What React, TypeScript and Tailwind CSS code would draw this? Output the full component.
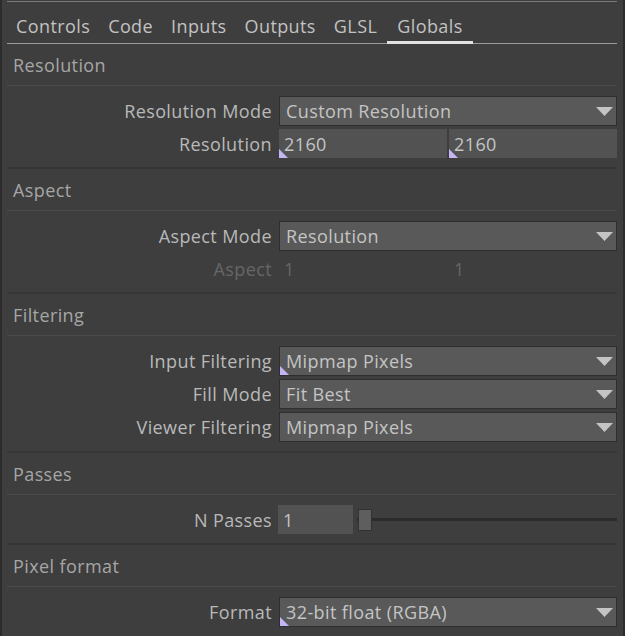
import React from "react";

const font = { fontFamily: '"Open Sans", "Noto Sans", sans-serif', letterSpacing: "0.4px" };

function Marker() {
  return (
    <svg className="absolute left-0 bottom-0" width="9" height="9" viewBox="0 0 9 9">
      <polygon points="0,0 9,9 0,9" fill="#c6b5f4" />
    </svg>
  );
}

function Label({ text, dim }: { text: string; dim?: boolean }) {
  return (
    <div className={`w-[272px] shrink-0 text-right pr-[7px] ${dim ? "text-[#666666]" : "text-[#b9b9b9]"}`}>
      {text}
    </div>
  );
}

function Dropdown({ value, marker }: { value: string; marker?: boolean }) {
  return (
    <div className="relative flex-1 h-[30px] bg-[#595959] border border-[#2e2e2e] flex items-center pl-[6px] text-[#c4c4c4]">
      <span className="flex-1">{value}</span>
      <svg className="mr-[3px]" width="17" height="9" viewBox="0 0 17 9">
        <polygon points="0,0 17,0 8.5,9" fill="#c4c4c4" />
      </svg>
      {marker && <Marker />}
    </div>
  );
}

function Field({ value, marker, className = "flex-1" }: { value: string; marker?: boolean; className?: string }) {
  return (
    <div className={`relative h-[29px] bg-[#525252] flex items-center pl-[5px] text-[#c4c4c4] ${className}`}>
      {value}
      {marker && <Marker />}
    </div>
  );
}

function Row({ children }: { children: React.ReactNode }) {
  return <div className="flex items-center">{children}</div>;
}

function Section({ title, children, last }: { title: string; children: React.ReactNode; last?: boolean }) {
  return (
    <div className={last ? "" : "border-b-2 border-[#363636]"}>
      <div className="h-[42px] flex items-center pl-[6px] text-[#a6a6a6] border-b border-[#4a4a4a]">{title}</div>
      <div className="pt-[10px] pb-[9px] flex flex-col gap-[3px]">{children}</div>
    </div>
  );
}

export default function App() {
  const tabs = ["Controls", "Code", "Inputs", "Outputs", "GLSL", "Globals"];
  return (
    <div
      className="w-[625px] h-[636px] overflow-hidden bg-[#3e3e3e] border-l-2 border-r-2 border-[#2c2c2c] text-[18px] leading-none"
      style={font}
    >
      <div className="ml-[5px] mr-[6px]">
        <div className="mt-[1px] h-px bg-[#7a7a7a]" />
        <div className="flex h-[42px] border-b border-[#9a9a9a]">
          {tabs.map((t) => (
            <div
              key={t}
              className={`flex items-center pt-[9px] text-[#c2c2c2] border-b-[3px] ${
                t === "Globals" ? "border-[#e2e2e2] -mb-px px-[10px] ml-[1px]" : "border-transparent px-[9px]"
              }`}
            >
              {t}
            </div>
          ))}
        </div>

        <Section title="Resolution">
          <Row>
            <Label text="Resolution Mode" />
            <Dropdown value="Custom Resolution" />
          </Row>
          <Row>
            <Label text="Resolution" />
            <div className="flex-1 flex gap-[2px]">
              <Field value="2160" marker />
              <Field value="2160" marker />
            </div>
          </Row>
        </Section>

        <Section title="Aspect">
          <Row>
            <Label text="Aspect Mode" />
            <Dropdown value="Resolution" />
          </Row>
          <Row>
            <Label text="Aspect" dim />
            <div className="flex-1 flex gap-[2px] h-[29px] items-center text-[#666666]">
              <div className="flex-1 pl-[5px]">1</div>
              <div className="flex-1 pl-[5px]">1</div>
            </div>
          </Row>
        </Section>

        <Section title="Filtering">
          <Row>
            <Label text="Input Filtering" />
            <Dropdown value="Mipmap Pixels" marker />
          </Row>
          <Row>
            <Label text="Fill Mode" />
            <Dropdown value="Fit Best" />
          </Row>
          <Row>
            <Label text="Viewer Filtering" />
            <Dropdown value="Mipmap Pixels" />
          </Row>
        </Section>

        <Section title="Passes">
          <Row>
            <Label text="N Passes" />
            <Field value="1" className="w-[75px] -ml-px" />
            <div className="relative flex-1 h-[29px] ml-[4px]">
              <div className="absolute left-0 right-0 top-[13px] h-[3px] bg-[#2b2b2b]" />
              <div className="absolute left-[1px] top-[4px] w-[14px] h-[22px] bg-[#5e5e5e] border border-[#323232]" />
            </div>
          </Row>
        </Section>

        <Section title="Pixel format" last>
          <Row>
            <Label text="Format" />
            <Dropdown value="32-bit float (RGBA)" marker />
          </Row>
        </Section>
      </div>
    </div>
  );
}
